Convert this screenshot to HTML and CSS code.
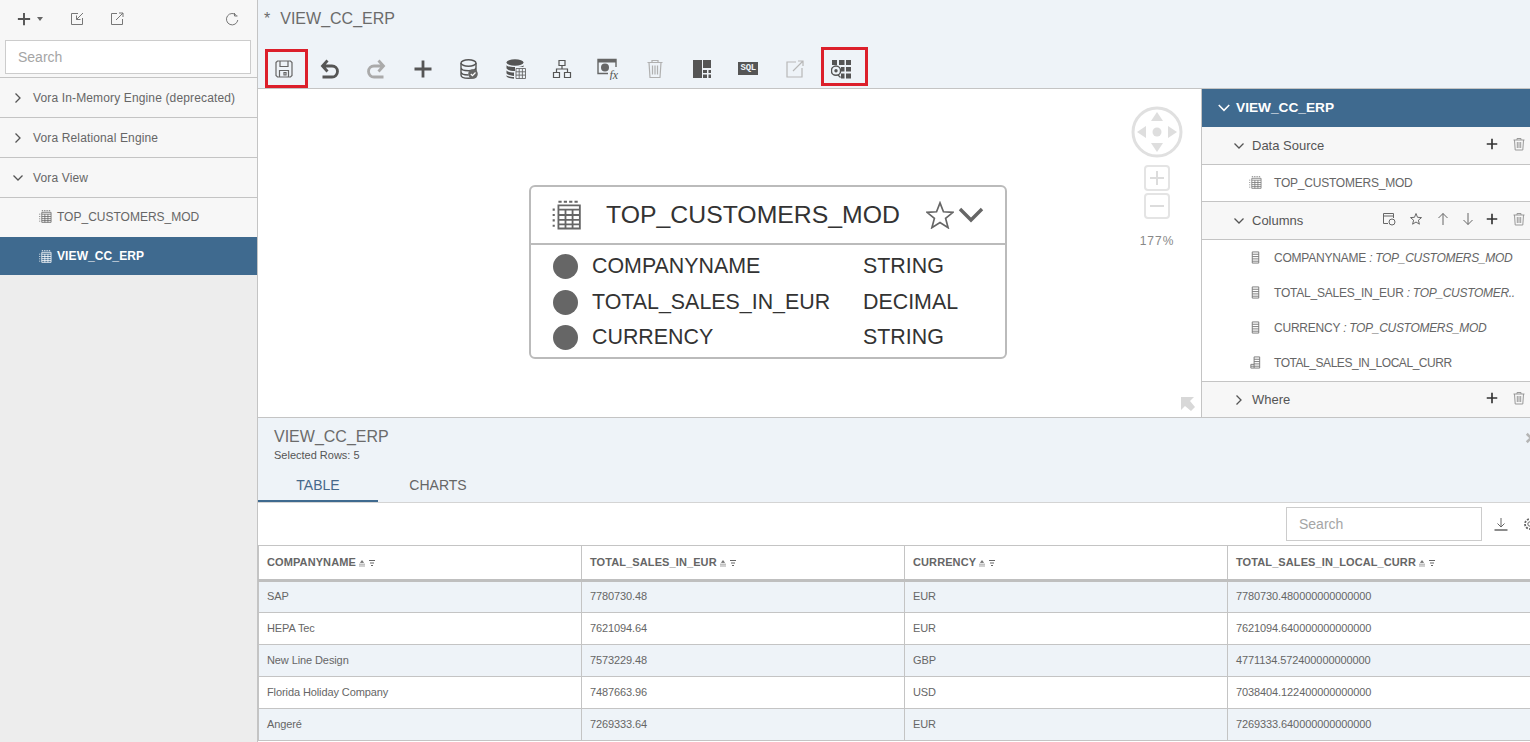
FILE: index.html

```html
<!DOCTYPE html>
<html lang="en">
<head>
    <meta charset="UTF-8">
    <title>VIEW_CC_ERP</title>
    <link rel="stylesheet" href="styles.css">
</head>
<body>
    <svg class="defs" width="0" height="0">
        <symbol id="i-plus" viewBox="0 0 16 16"><path d="M8 1v14M1 8h14" fill="none" stroke="currentColor" stroke-width="2.200"/></symbol>
        <symbol id="i-right" viewBox="0 0 12 12"><path d="M3.500 1.500 8 6l-4.500 4.500" fill="none" stroke="currentColor" stroke-width="1.300"/></symbol>
        <symbol id="i-down" viewBox="0 0 12 12"><path d="M1.500 3.500 6 8l4.500-4.500" fill="none" stroke="currentColor" stroke-width="1.300"/></symbol>
        <symbol id="i-table" viewBox="0 0 14 14"><path d="M3 .8h1.500M5.500 .8H7M8 .8h1.500M10.500 .8H12M.8 4v1M.8 6.500v1M.8 9v1M.8 11.500v1" stroke="currentColor" fill="none"/><path d="M3 2.500h10v10.800H3zM3 4.500h10M3 7h10M3 9.300h10M3 11.400h10M6.300 4.500v8.800M9.600 4.500v8.800" stroke="currentColor" fill="none" stroke-width=".85"/></symbol>
        <symbol id="i-trash" viewBox="0 0 14 14"><path d="M1.500 3h11M5 3V1.500h4V3M2.500 3l.7 10h7.600l.7-10M5.300 5v6M7 5v6M8.700 5v6" fill="none" stroke="currentColor"/></symbol>
        <symbol id="i-column" viewBox="0 0 10 14"><path d="M1.500 1h7v12h-7zM1.500 3.500h7M1.500 6h7M1.500 8.500h7M1.500 11h7" fill="none" stroke="currentColor"/></symbol>
        <symbol id="i-calc" viewBox="0 0 12 14"><path d="M4.500 1h6v12h-6zM4.500 3.500h6M4.500 6h6M1 9h3.500M1 9v4h3.500M1 11h3.500M4.500 8.500h6M4.500 11h6" fill="none" stroke="currentColor"/></symbol>
        <symbol id="i-sort" viewBox="0 0 8 8"><path d="M4 1.500 5.500 3.500h-3zM1 5.200h6M1 7h6" fill="currentColor" stroke="currentColor" stroke-width=".6"/></symbol>
        <symbol id="i-filter" viewBox="0 0 8 8"><path d="M1 1.500h6M2 4h4M3 6.500h2" fill="none" stroke="currentColor"/></symbol>
    </svg>

    <!-- Left navigation -->
    <div class="sidebar">
        <div class="side-tools">
            <svg class="side-plus"><use href="#i-plus"/></svg>
            <span class="caret"></span>
            <svg class="side-icon first" viewBox="0 0 14 14"><path d="M8 1.500H1.500v11h11V6M13 1 6.500 7.500M6.500 3.500v4h4" fill="none" stroke="currentColor"/></svg>
            <svg class="side-icon" viewBox="0 0 14 14"><path d="M7 1.500H1.500v11h11V7M6 8l7-7M9 1h4v4" fill="none" stroke="currentColor"/></svg>
            <svg class="side-icon refresh" viewBox="0 0 14 14"><path d="M11.500 3.500A5.700 5.700 0 1 0 12.800 8M9.500 1v3h3" fill="none" stroke="currentColor"/></svg>
        </div>
        <div class="side-search"><input type="text" placeholder="Search"></div>
        <div class="tree-row"><svg class="chev"><use href="#i-right"/></svg>Vora In-Memory Engine (deprecated)</div>
        <div class="tree-row"><svg class="chev"><use href="#i-right"/></svg>Vora Relational Engine</div>
        <div class="tree-row"><svg class="chev"><use href="#i-down"/></svg>Vora View</div>
        <div class="tree-leaf"><svg class="leaf-icon"><use href="#i-table"/></svg>TOP_CUSTOMERS_MOD</div>
        <div class="tree-leaf active"><svg class="leaf-icon"><use href="#i-table"/></svg>VIEW_CC_ERP</div>
    </div>

    <div class="main">
        <!-- Title and toolbar -->
        <div class="top">
            <div class="title"><span class="dirty">*</span>VIEW_CC_ERP</div>
            <div class="toolbar">
                <div class="tool marked"><svg viewBox="0 0 20 20"><path d="M2 3.500 3.500 2h13L18 3.500v13L16.500 18h-13L2 16.500zM6 2v5.500h8V2M5.500 18v-6.500h9V18M10 13.500h2V16h-2z" fill="none" stroke="#666" stroke-width="1.200"/></svg></div>
                <div class="tool"><svg viewBox="0 0 20 20"><path d="M7.500 1.500 2.500 7l5 5.500M3 7h9a5.500 5.500 0 0 1 0 11H2.500" fill="none" stroke="#555" stroke-width="2.800"/></svg></div>
                <div class="tool"><svg viewBox="0 0 20 20"><path d="m12.500 1.500 5 5.500-5 5.500M17 7H8a5.500 5.500 0 0 0 0 11h9.500" fill="none" stroke="#aaa" stroke-width="2.800"/></svg></div>
                <div class="tool"><svg viewBox="0 0 20 20"><path d="M10 1.500v17M1.500 10h17" fill="none" stroke="#555" stroke-width="2.800"/></svg></div>
                <div class="tool"><svg viewBox="0 0 20 20"><ellipse cx="9.500" cy="4" rx="7.500" ry="3.200" fill="none" stroke="#555" stroke-width="1.400"/><path d="M2 4v12c0 2 3.500 3.300 7.500 3.300S17 18 17 16V4M2 8.500c0 2 3.500 3.200 7.500 3.200S17 10.500 17 8.500M2 12.800c0 2 3.500 3.200 7.500 3.200" fill="none" stroke="#555" stroke-width="1.400"/><circle cx="14" cy="15" r="4.800" fill="#666"/><path d="m11.800 15 1.700 1.700 3-3.200" fill="none" stroke="#fff" stroke-width="1.200"/></svg></div>
                <div class="tool"><svg viewBox="0 0 20 20"><ellipse cx="9" cy="3.500" rx="8.500" ry="3.200" fill="#555"/><path d="M.5 6v3c0 1.500 3.500 3 8.500 3V8C4 8 .5 7.500.5 6zM.5 11v3c0 1.500 3.500 2.500 7.500 3v-3.500c-4 0-7.500-1-7.500-2.500zM17.500 6c0 1-2 1.800-5.500 2h5.500zM.5 16v1c0 1.500 3.500 2.500 7.500 2.800V18c-4 0-7.500-1-7.500-2z" fill="#555"/><path d="M10 9.500h9.500v10H10zM10 12.800h9.500M10 16.100h9.500M13.200 9.500v10M16.400 9.500v10" fill="none" stroke="#666" stroke-width=".9"/></svg></div>
                <div class="tool"><svg viewBox="0 0 20 20"><path d="M7 1.500h6v5H7zM1.500 13.500h6v5h-6zM12.500 13.500h6v5h-6zM10 6.500V10M4.500 13.500V10h11v3.500" fill="none" stroke="#555" stroke-width="1.200"/></svg></div>
                <div class="tool"><svg class="wide" viewBox="0 0 24 22"><path d="M11 15.500H1v-14h18V9" fill="none" stroke="#666" stroke-width="1.400"/><path d="M1 1.500h18v3H1z" fill="#666"/><circle cx="8" cy="9.500" r="4" fill="#666"/><text x="12.500" y="20.500" class="fx">fx</text></svg></div>
                <div class="tool"><svg viewBox="0 0 20 20"><path d="M2.500 3.500h15M7 3.500V1.500h6v2M4 3.500l1 15h10l1-15M7.500 6.500v9M10 6.500v9M12.500 6.500v9" fill="none" stroke="#b0b0b0" stroke-width="1.200"/></svg></div>
                <div class="tool"><svg viewBox="0 0 20 20"><path d="M1 1h9v18H1zM11 1h8v8h-8zM11 11h4v3h-4zM16.500 11H19v3h-2.500zM11 15.500h4V19h-4zM16.500 15.500H19V19h-2.500z" fill="#555"/></svg></div>
                <div class="tool"><span class="sql">SQL</span></div>
                <div class="tool"><svg viewBox="0 0 20 20"><path d="M11 3H2v15h15V9M8 12 18 2M13 2h5v5" fill="none" stroke="#b8b8b8" stroke-width="1.200"/></svg></div>
                <div class="tool marked-up"><svg viewBox="0 0 20 20"><path d="M1 1h5v5H1zM8 1h5.500v5H8zM15 1h5v5h-5zM10 8h3.500v4.500H10zM15 8h5v4.500h-5zM10 14.500h3.500v5H10zM15 14.500h5v5h-5z" fill="#555"/><circle cx="5" cy="11.700" r="4.600" fill="#eef3f8" stroke="#555" stroke-width="1.500"/><circle cx="5" cy="11.700" r="1.700" fill="#555"/><path d="m7 16 2.500 2.500" stroke="#555" stroke-width="1.300"/></svg></div>
            </div>
        </div>

        <div class="work">
            <!-- Diagram canvas -->
            <div class="canvas">
                <div class="node">
                    <div class="node-head">
                        <svg class="node-icon"><use href="#i-table"/></svg>
                        <span class="node-name">TOP_CUSTOMERS_MOD</span>
                        <svg class="node-star" viewBox="0 0 30 30"><path d="m15 2 3.700 9.500 10.300.6-8 6.500 2.700 10L15 23l-8.700 5.600 2.700-10-8-6.500 10.300-.6z" fill="none" stroke="#666" stroke-width="1.800"/></svg>
                        <svg class="node-chev" viewBox="0 0 26 16"><path d="m2 2 11 11L24 2" fill="none" stroke="#666" stroke-width="3.400"/></svg>
                    </div>
                    <div class="node-body">
                        <div class="node-row"><span class="dot"></span><span class="col-name">COMPANYNAME</span><span>STRING</span></div>
                        <div class="node-row"><span class="dot"></span><span class="col-name">TOTAL_SALES_IN_EUR</span><span>DECIMAL</span></div>
                        <div class="node-row"><span class="dot"></span><span class="col-name">CURRENCY</span><span>STRING</span></div>
                    </div>
                </div>

                <div class="nav-ctl">
                    <svg class="pad" viewBox="0 0 52 52"><circle cx="26" cy="26" r="24" fill="none" stroke="#e0e0e0" stroke-width="3"/><path d="m26 6 6 9H20zM26 46l-6-9h12zM6 26l9-6v12zM46 26l-9 6V20z" fill="#dedede"/><circle cx="26" cy="26" r="4.500" fill="#dedede"/></svg>
                    <div class="zoom-btn"><svg viewBox="0 0 16 16"><path d="M8 1v14M1 8h14" stroke="#dcdcdc" stroke-width="2"/></svg></div>
                    <div class="zoom-btn"><svg viewBox="0 0 16 16"><path d="M1 8h14" stroke="#dcdcdc" stroke-width="2"/></svg></div>
                    <div class="zoom-pct">177%</div>
                </div>
                <svg class="collapse" viewBox="0 0 14 14"><path d="M0 0h13L9 4l5 6-4 4-6-5-4 4z" fill="#d8d8d8"/></svg>
            </div>

            <!-- Properties -->
            <div class="props">
                <div class="props-head"><svg class="chev"><use href="#i-down"/></svg>VIEW_CC_ERP</div>
                <div class="sec-row">
                    <svg class="chev"><use href="#i-down"/></svg><span class="sec-name">Data Source</span>
                    <svg class="act plus"><use href="#i-plus"/></svg><svg class="act trash"><use href="#i-trash"/></svg>
                </div>
                <div class="prop-group">
                    <div class="prop-item"><svg class="prop-icon"><use href="#i-table"/></svg>TOP_CUSTOMERS_MOD</div>
                </div>
                <div class="sec-row">
                    <svg class="chev"><use href="#i-down"/></svg><span class="sec-name">Columns</span>
                    <svg class="act tool-sm wider" viewBox="0 0 14 14"><path d="M1.500 1.500h10V6M1.500 1.500v10H6M1.500 4h10" fill="none" stroke="#666"/><circle cx="10" cy="10" r="3" fill="none" stroke="#666"/></svg>
                    <svg class="act tool-sm wider" viewBox="0 0 14 14"><path d="m7 1.500 1.500 3.800 4 .3-3.100 2.600 1 4L7 10l-3.400 2.200 1-4L1.500 5.600l4-.3z" fill="none" stroke="#666"/></svg>
                    <svg class="act tool-sm" viewBox="0 0 14 14"><path d="M7 13V1.500M2.500 6 7 1.500 11.500 6" fill="none" stroke="#666"/></svg>
                    <svg class="act tool-sm" viewBox="0 0 14 14"><path d="M7 1v11.500M2.500 8 7 12.500 11.500 8" fill="none" stroke="#666"/></svg>
                    <svg class="act plus"><use href="#i-plus"/></svg><svg class="act trash"><use href="#i-trash"/></svg>
                </div>
                <div class="prop-group">
                    <div class="prop-item"><svg class="prop-icon"><use href="#i-column"/></svg>COMPANYNAME <em>: TOP_CUSTOMERS_MOD</em></div>
                    <div class="prop-item"><svg class="prop-icon"><use href="#i-column"/></svg>TOTAL_SALES_IN_EUR <em>: TOP_CUSTOMER..</em></div>
                    <div class="prop-item"><svg class="prop-icon"><use href="#i-column"/></svg>CURRENCY <em>: TOP_CUSTOMERS_MOD</em></div>
                    <div class="prop-item tight"><svg class="prop-icon"><use href="#i-calc"/></svg>TOTAL_SALES_IN_LOCAL_CURR</div>
                </div>
                <div class="sec-row last">
                    <svg class="chev"><use href="#i-right"/></svg><span class="sec-name">Where</span>
                    <svg class="act plus"><use href="#i-plus"/></svg><svg class="act trash"><use href="#i-trash"/></svg>
                </div>
            </div>
        </div>

        <!-- Result preview -->
        <div class="results">
            <div class="res-head">
                <div class="res-title">VIEW_CC_ERP</div>
                <div class="res-sub">Selected Rows: 5</div>
                <svg class="res-close" viewBox="0 0 10 10"><path d="m1.500 1.500 7 7M8.500 1.500l-7 7" stroke="#b5b5b5" stroke-width="2.200"/></svg>
                <div class="tabs">
                    <div class="tab on">TABLE</div>
                    <div class="tab">CHARTS</div>
                </div>
            </div>
            <div class="res-tools">
                <input type="text" placeholder="Search">
                <svg class="dl" viewBox="0 0 14 14"><path d="M7 1v8.500M3.500 6.500 7 10l3.500-3.500" fill="none" stroke="#666"/><path d="M.5 13h13" stroke="#666" stroke-width="1.500"/></svg>
                <svg class="gear" viewBox="0 0 14 14"><circle cx="7" cy="7" r="2.200" fill="none" stroke="#666"/><circle cx="7" cy="7" r="5" fill="none" stroke="#666" stroke-width="1.800" stroke-dasharray="2 1.300"/></svg>
            </div>
            <table class="grid">
                <thead>
                    <tr>
                        <th>COMPANYNAME<svg class="th-i"><use href="#i-sort"/></svg><svg class="th-i"><use href="#i-filter"/></svg></th>
                        <th>TOTAL_SALES_IN_EUR<svg class="th-i"><use href="#i-sort"/></svg><svg class="th-i"><use href="#i-filter"/></svg></th>
                        <th>CURRENCY<svg class="th-i"><use href="#i-sort"/></svg><svg class="th-i"><use href="#i-filter"/></svg></th>
                        <th>TOTAL_SALES_IN_LOCAL_CURR<svg class="th-i"><use href="#i-sort"/></svg><svg class="th-i"><use href="#i-filter"/></svg></th>
                    </tr>
                </thead>
                <tbody>
                    <tr><td>SAP</td><td>7780730.48</td><td>EUR</td><td>7780730.480000000000000</td></tr>
                    <tr><td>HEPA Tec</td><td>7621094.64</td><td>EUR</td><td>7621094.640000000000000</td></tr>
                    <tr><td>New Line Design</td><td>7573229.48</td><td>GBP</td><td>4771134.572400000000000</td></tr>
                    <tr><td>Florida Holiday Company</td><td>7487663.96</td><td>USD</td><td>7038404.122400000000000</td></tr>
                    <tr><td>Angeré</td><td>7269333.64</td><td>EUR</td><td>7269333.640000000000000</td></tr>
                </tbody>
            </table>
        </div>
    </div>
</body>
</html>
```

FILE: styles.css

```css
*, *::after { box-sizing: border-box; }
html, body { height: 100%; }
body { margin: 0; display: flex; height: 742px; overflow: hidden; font-family: "Liberation Sans", Arial, sans-serif; color: #666; background: #fff; }
.defs { position: absolute; }
svg { display: block; flex: none; }

/* sidebar */
.sidebar { width: 258px; flex: none; background: #ededed; border-right: 1px solid #c4c4c4; }
.side-tools { height: 38px; background: #f7f7f7; display: flex; align-items: center; padding: 0 17px; color: #777; }
.side-plus { width: 14px; height: 14px; color: #555; }
.caret { width: 0; height: 0; margin-left: 6px; border: 3.500px solid transparent; border-top: 4px solid #666; border-bottom: 0; }
.side-icon { width: 14px; height: 14px; margin-left: 26px; }
.side-icon.first { margin-left: 27px; }
.side-icon.refresh { margin-left: auto; margin-right: 1px; }
.side-search { height: 40px; background: #f7f7f7; padding: 2px 6px 0 5px; border-bottom: 1px solid #c4c4c4; }
.side-search input { width: 100%; height: 34px; border: 1px solid #ccc; background: #fff; padding: 0 12px; font: 14px "Liberation Sans", Arial, sans-serif; outline: none; }
input::placeholder { color: #a5a5a5; opacity: 1; }
.tree-row { height: 40px; display: flex; align-items: center; padding-left: 12px; background: #f7f7f7; border-bottom: 1px solid #c4c4c4; font-size: 12px; letter-spacing: .14px; color: #666; }
.chev { width: 12px; height: 12px; margin-right: 9px; color: #555; }
.tree-leaf { height: 39px; display: flex; align-items: center; padding: 0 0 2px 39px; background: #f7f7f7; font-size: 12px; }
.tree-leaf.active { height: 38px; padding-bottom: 0; background: #3f6a8f; color: #fff; font-weight: bold; letter-spacing: .1px; }
.leaf-icon { width: 13px; height: 13px; margin-right: 5px; color: #666; }
.active .leaf-icon { color: #fff; }

/* header + toolbar */
.main { flex: 1; min-width: 0; display: flex; flex-direction: column; }
.top { height: 89px; background: #eef3f8; border-bottom: 1px solid #c4c4c4; }
.title { height: 49px; padding: 10px 0 0 6px; font-size: 16px; line-height: 18px; color: #6b6b6b; }
.dirty { margin-right: 10px; }
.toolbar { display: flex; height: 39px; padding-left: 2px; }
.tool { width: 46.500px; display: flex; align-items: center; justify-content: center; position: relative; }
.tool svg { width: 20px; height: 20px; }
.tool svg.wide { width: 24px; height: 22px; }
.fx { font: italic 12px "Liberation Serif", serif; fill: #555; }
.sql { background: #555; color: #eef3f8; font: bold 9px "Liberation Mono", monospace; line-height: 13px; padding: 0 2px; letter-spacing: -.2px; }
.marked svg { margin-left: 1px; }
.marked::after, .marked-up::after { content: ""; position: absolute; border: 3px solid #dc1f2b; }
.marked::after { left: 5px; top: 0; width: 43px; height: 39px; }
.marked-up::after { left: 3px; top: -2px; width: 47px; height: 39px; }

/* middle */
.work { height: 329px; display: flex; border-bottom: 1px solid #c4c4c4; }
.canvas { flex: 1; position: relative; background: #fff; }
.node { position: absolute; left: 271px; top: 96px; width: 478px; height: 174px; border: 2px solid #bbb; border-radius: 6px; background: #fff; font-size: 21.400px; color: #333; }
.node-head { height: 58px; border-bottom: 2px solid #bbb; display: flex; align-items: center; padding-left: 21px; }
.node-icon { width: 30px; height: 30px; color: #666; }
.node-name { margin-left: 24px; font-size: 24.800px; }
.node-star { width: 28px; height: 28px; margin-left: 26px; }
.node-chev { width: 26px; height: 16px; margin-left: 4px; }
.node-body { padding-top: 4px; }
.node-row { height: 35.500px; display: flex; align-items: center; padding-left: 22px; }
.dot { width: 25px; height: 25px; border-radius: 50%; background: #666; margin-right: 14px; }
.col-name { width: 271px; }
.nav-ctl { position: absolute; left: 872px; top: 17px; width: 54px; display: flex; flex-direction: column; align-items: center; color: #888; }
.pad { width: 52px; height: 52px; }
.zoom-btn { width: 26px; height: 26px; border: 2px solid #e4e4e4; border-radius: 4px; padding: 3px; margin-top: 2px; }
.pad + .zoom-btn { margin-top: 7px; }
.zoom-pct { margin-top: 15px; font-size: 12px; letter-spacing: 1px; }
.collapse { position: absolute; right: 6px; bottom: 6px; width: 14px; height: 14px; }
.props { width: 329px; flex: none; border-left: 1px solid #c4c4c4; display: flex; flex-direction: column; }
.props-head { height: 38px; flex: none; background: #3f6a8f; color: #fff; font-size: 13.700px; font-weight: bold; display: flex; align-items: center; padding: 0 0 1px 15px; }
.props-head .chev { width: 14px; height: 14px; margin-right: 5px; color: #fff; }
.sec-row { height: 38px; flex: none; background: #f7f7f7; border-bottom: 1px solid #c4c4c4; display: flex; align-items: center; padding: 0 4px 0 31px; font-size: 13px; color: #555; }
.sec-row .chev { margin-right: 7px; }
.sec-row.last { height: 35px; border-bottom: 0; }
.sec-name { margin-right: auto; }
.act { width: 14px; height: 14px; margin-top: -3px; }
.act.plus { width: 12px; height: 12px; color: #333; }
.act.trash { width: 14px; height: 14px; margin-left: 14px; color: #999; }
.act.tool-sm { margin-right: 11px; }
.act.tool-sm.wider { margin-right: 13px; }
.prop-group { flex: none; border-bottom: 1px solid #c4c4c4; padding-bottom: 1px; }
.prop-item { height: 35px; display: flex; align-items: center; padding-left: 47px; font-size: 12px; letter-spacing: -.22px; white-space: pre; color: #666; }
.prop-item.tight { letter-spacing: -.45px; }
.prop-icon { width: 13px; height: 13px; margin-right: 12px; color: #777; }
.prop-item em { letter-spacing: -.3px; }

/* results */
.results { flex: 1; min-height: 0; display: flex; flex-direction: column; overflow: hidden; }
.res-head { height: 85px; background: #eef3f8; border-bottom: 1px solid #d4d4d4; padding: 10px 0 0; position: relative; }
.res-title { margin-left: 16px; font-size: 16px; line-height: 18px; color: #6b6b6b; }
.res-sub { margin: 3px 0 0 16px; font-size: 11px; line-height: 13px; color: #555; }
.res-close { position: absolute; right: -7px; top: 14px; width: 12px; height: 12px; }
.tabs { display: flex; margin-top: 8px; }
.tab { width: 120px; height: 32px; text-align: center; line-height: 30px; font-size: 14px; color: #666; }
.tab.on { color: #46688a; border-bottom: 2px solid #3f6a8f; }
.res-tools { height: 42px; flex: none; display: flex; align-items: center; }
.res-tools input { width: 196px; height: 34px; margin-left: 1028px; border: 1px solid #ccc; padding: 0 12px; font: 14px "Liberation Sans", Arial, sans-serif; outline: none; }
.dl { width: 14px; height: 14px; margin-left: 12px; }
.gear { width: 14px; height: 14px; margin-left: 15px; }
.grid { width: 1293px; border-collapse: collapse; table-layout: fixed; font-size: 11px; letter-spacing: -.1px; color: #666; flex: none; }
.grid th, .grid td { border: 1px solid #c4c4c4; text-align: left; padding: 0 0 0 8px; white-space: nowrap; }
.grid th { height: 35px; padding-bottom: 1px; border-bottom: 3px solid #bfbfbf; font-size: 11px; letter-spacing: .1px; color: #666; }
.grid td { height: 32px; padding-bottom: 2px; }
.grid tbody tr:nth-child(odd) { background: #eef3f8; }
.th-i { display: inline-block; width: 8px; height: 8px; margin-left: 2px; vertical-align: -1px; color: #666; }
```
